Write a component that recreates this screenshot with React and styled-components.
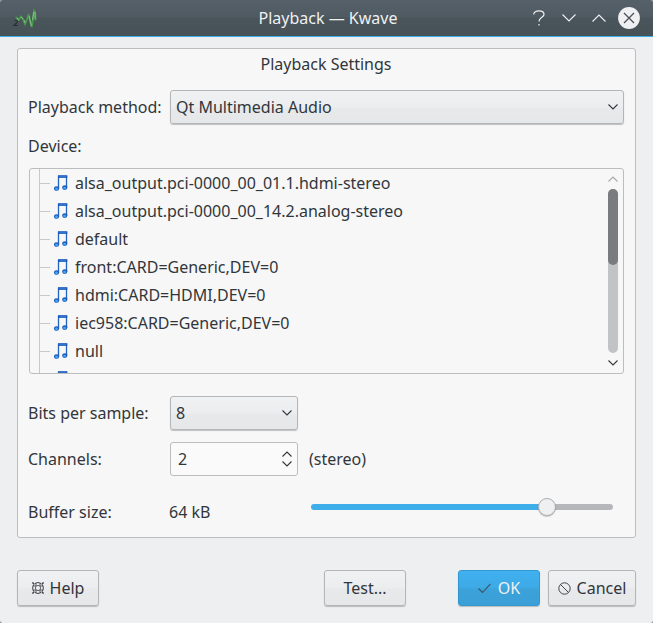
import React, { useRef, useState } from 'react';
import styled, { createGlobalStyle, css } from 'styled-components';

const GlobalStyle = createGlobalStyle`
  *, *::before, *::after { box-sizing: border-box; }
  body {
    margin: 0;
    background: #8b8f92;
    color: #31363b;
    font: 16px/22px "Noto Sans", sans-serif;
  }
  button, input, select { font: inherit; color: inherit; margin: 0; }
`;

const Window = styled.div`
  background: #eeeff1;
  border-radius: 3px;
  overflow: hidden;
`;

const TitleBar = styled.header`
  display: grid;
  grid-template-columns: 1fr auto 1fr;
  align-items: center;
  height: 37px;
  padding: 0 9px 0 12px;
  border-bottom: 1px solid #3daee9;
  background: linear-gradient(#566069, #4f5a62 46%, #4a555b 50%, #475257);
  color: #eff0f1;
`;

const WindowTitle = styled.h1`
  margin: 0;
  font-size: 16px;
  font-weight: 400;
`;

const WindowControls = styled.div`
  display: flex;
  justify-content: flex-end;
`;

const PlainButton = styled.button`
  display: flex;
  align-items: center;
  justify-content: center;
  padding: 0;
  border: 0;
  background: none;
`;

const ControlButton = styled(PlainButton)`
  width: 30px;
  height: 30px;
  color: #eff0f1;
`;

const Content = styled.main`
  padding: 11px 17px 17px;
`;

const Group = styled.section`
  padding: 4px 11px 11px 10px;
  border: 1px solid #bbbdbf;
  border-radius: 3px;
  background: #f7f7f7;
`;

const GroupTitle = styled.h2`
  margin: 0 0 15px;
  font-size: 16px;
  font-weight: 400;
  text-align: center;
`;

const FormRow = styled.div`
  display: grid;
  grid-template-columns: 142px ${(p) => (p.$wide ? '1fr' : '128px 1fr')};
  align-items: center;
  margin-top: ${(p) => p.$gap || 0}px;
`;

const DeviceLabel = styled.div`
  margin: 11px 0;
`;

const raised = css`
  border: 1px solid #b3b5b7;
  border-radius: 3px;
  background: linear-gradient(#f0f1f2, #ecedef 50%, #e8e9eb 54%, #e6e7e9);
  box-shadow: 0 1px 1px rgba(0, 0, 0, 0.22);
`;

const SelectBox = styled.div`
  display: grid;
  align-items: center;
  > * { grid-area: 1 / 1; }
  > svg { justify-self: end; margin-right: 6px; pointer-events: none; }
`;

const Select = styled.select`
  ${raised}
  width: 100%;
  height: 34px;
  padding: 0 24px 0 5px;
  appearance: none;
`;

const DeviceBox = styled.div`
  display: flex;
  height: 206px;
  margin: 0 0 22px 1px;
  padding-right: 5px;
  border: 1px solid #bbbdbf;
  border-radius: 3px;
`;

const DeviceList = styled.ul`
  flex: 1;
  min-width: 0;
  margin: 0;
  padding: 0 0 0 9px;
  list-style: none;
  overflow-y: auto;
  scrollbar-width: none;
`;

const Device = styled.li`
  display: flex;
  align-items: center;
  height: 28px;
  border-left: 1px solid #c6c8c9;
  white-space: nowrap;
  &::before {
    content: "";
    width: 10px;
    height: 1px;
    margin-right: 4px;
    background: #c6c8c9;
  }
  > svg { margin-right: 7px; }
`;

const ScrollBar = styled.div`
  display: flex;
  flex-direction: column;
  width: 10px;
`;

const ScrollButton = styled(PlainButton)`
  height: 20px;
  color: ${(p) => (p.$dim ? '#a5a8ab' : '#31363b')};
`;

const ScrollTrack = styled.div`
  flex: 1;
  border-radius: 5px;
  background: #c2c3c5;
`;

const ScrollThumb = styled.div`
  height: 76px;
  border-radius: 5px;
  background: #7a7b7f;
`;

const SpinBox = styled.div`
  display: flex;
  height: 34px;
  border: 1px solid #bbbdbf;
  border-radius: 3px;
  background: #fafafa;
`;

const SpinInput = styled.input`
  flex: 1;
  min-width: 0;
  padding: 0 0 0 7px;
  border: 0;
  background: none;
  outline: none;
  appearance: textfield;
  &::-webkit-inner-spin-button { appearance: none; display: none; }
`;

const SpinButtons = styled.div`
  display: flex;
  flex-direction: column;
  justify-content: center;
  padding-right: 5px;
`;

const SpinButton = styled(PlainButton)`
  height: 10px;
`;

const Hint = styled.span`
  padding-left: 11px;
`;

const BufferValue = styled.output`
  margin-left: -1px;
`;

const Slider = styled.input`
  width: auto;
  height: 18px;
  margin: 0 11px 10px 13px;
  background: none;
  appearance: none;
  &::-webkit-slider-runnable-track {
    height: 6px;
    border-radius: 3px;
    background: linear-gradient(to right, #3daee9 var(--fill), #b6b7bb var(--fill));
  }
  &::-webkit-slider-thumb {
    width: 18px;
    height: 18px;
    margin-top: -6px;
    border: 1px solid #acadaf;
    border-radius: 50%;
    background: #eff0f1;
    box-shadow: 0 1px 1px rgba(0, 0, 0, 0.2);
    appearance: none;
  }
`;

const ButtonBar = styled.footer`
  display: grid;
  grid-template-columns: 1fr auto auto auto;
  justify-items: start;
  margin-top: 32px;
`;

const DialogButton = styled.button`
  ${raised}
  display: flex;
  align-items: center;
  justify-content: center;
  gap: ${(p) => p.$gap || 6}px;
  width: ${(p) => (p.$wide ? 88 : 82)}px;
  height: 36px;
  margin-right: ${(p) => p.$after || 0}px;
  padding: 0;
  ${(p) => p.$primary && css`
    border-color: #3498d0;
    background: linear-gradient(#40b0ef, #3daae6 49%, #3ba2da 53%, #3a9fd6);
    color: #eff0f1;
  `}
`;

function Chevron({ up, width = 10 }) {
  const h = width / 2;
  return (
    <svg width={width} height={h + 1} viewBox={`0 0 ${width} ${h + 1}`} fill="none" stroke="currentColor" strokeWidth="1.1" aria-hidden="true">
      <path d={up ? `M.5 ${h + 0.5} L${h} 1 L${width - 0.5} ${h + 0.5}` : `M.5 .5 L${h} ${h} L${width - 0.5} .5`} />
    </svg>
  );
}

function KwaveIcon() {
  return (
    <svg width="25" height="20" viewBox="0 0 25 20" fill="none" aria-hidden="true">
      <path d="M2.500 12.500h4l-2 2.500-2.500 2.500h4" stroke="#2a3033" strokeWidth="1.200" />
      <path d="M4 9l2.500 3L9 8.500l2 2.500 2 5 2.500-6 1-4 1.500 6 1.700 7 1.500-9L22 2.500l1 1 .5 9" stroke="#46994a" strokeWidth="1.900" />
      <path d="M5 10l2 2.500M9 9l2 2M12 12l1.200 3M17 8l2.400 10M20.500 12l1.200-8M23 4l.3 7" stroke="#9ac896" strokeWidth=".8" />
    </svg>
  );
}

function MusicIcon() {
  return (
    <svg width="14" height="16" viewBox="0 0 14 16" aria-hidden="true">
      <path d="M4.500 13V1.500h8V12" fill="none" stroke="#2563c0" strokeWidth="1.300" />
      <path d="M4 .2h9.300v2.800H4z" fill="#2159b8" />
      <path d="M5.500 2h6.500" stroke="#3f92e8" strokeWidth="1" />
      <ellipse cx="2.600" cy="13.500" rx="2.600" ry="2.300" fill="#1f5cb8" />
      <ellipse cx="10.800" cy="12.600" rx="2.600" ry="2.300" fill="#1f5cb8" />
      <circle cx="2.500" cy="14" r="1.400" fill="#4aa6f4" />
      <circle cx="10.600" cy="13.100" r="1.400" fill="#4aa6f4" />
    </svg>
  );
}

function QuestionIcon() {
  return (
    <svg width="12" height="16" viewBox="0 0 12 16" fill="none" stroke="currentColor" strokeWidth="1.200" aria-hidden="true">
      <path d="M.7 4.500C.7 2 3 .8 6 .8s5 1.200 5 3.600C11 7.500 6 7 6 11.500" />
      <path d="M6 14v1.500" />
    </svg>
  );
}

function CloseIcon() {
  return (
    <svg width="22" height="22" viewBox="0 0 22 22" aria-hidden="true">
      <circle cx="11" cy="11" r="10.900" fill="#eff0f1" />
      <path d="M6 6l10 10M16 6L6 16" stroke="#475057" strokeWidth="1.300" />
    </svg>
  );
}

function HelpIcon() {
  return (
    <svg width="12" height="12" viewBox="0 0 12 12" fill="none" stroke="#3b4045" aria-hidden="true">
      <path d="M3 1.500C5 .3 7 .3 9 1.500M3 10.500c2 1.200 4 1.200 6 0M1.500 3C.4 5 .4 7 1.500 9M10.500 3c1.100 2 1.100 4 0 6" />
      <circle cx="6" cy="6" r="2.600" strokeWidth=".8" />
      <path d="M4 1v3H.8M8 1v3h3.200M4 11V8H.8M8 11V8h3.200" strokeWidth=".8" />
      <path d="M.4.4l2 2M11.600.4l-2 2M.4 11.600l2-2M11.600 11.600l-2-2" strokeWidth="1.400" />
    </svg>
  );
}

function CheckIcon() {
  return (
    <svg width="13" height="11" viewBox="0 0 13 11" fill="none" stroke="#3f515e" strokeWidth="1.100" aria-hidden="true">
      <path d="M.5 5.500l4 4L12.500.8" />
    </svg>
  );
}

function CancelIcon() {
  return (
    <svg width="13" height="13" viewBox="0 0 13 13" fill="none" stroke="#41464b" strokeWidth="1" aria-hidden="true">
      <circle cx="6.500" cy="6.500" r="5.700" />
      <path d="M2.500 2.500l8 8" />
    </svg>
  );
}

const devices = [
  'alsa_output.pci-0000_00_01.1.hdmi-stereo',
  'alsa_output.pci-0000_00_14.2.analog-stereo',
  'default',
  'front:CARD=Generic,DEV=0',
  'hdmi:CARD=HDMI,DEV=0',
  'iec958:CARD=Generic,DEV=0',
  'null',
  '',
];

export default function App() {
  const list = useRef(null);
  const [channels, setChannels] = useState(2);
  const [buffer, setBuffer] = useState(16);
  const scroll = (dy) => list.current.scrollBy(0, dy);

  return (
    <>
      <GlobalStyle />
      <Window>
        <TitleBar>
          <KwaveIcon />
          <WindowTitle>Playback — Kwave</WindowTitle>
          <WindowControls>
            <ControlButton aria-label="Context help"><QuestionIcon /></ControlButton>
            <ControlButton aria-label="Minimize"><Chevron width={14} /></ControlButton>
            <ControlButton aria-label="Maximize"><Chevron up width={14} /></ControlButton>
            <ControlButton aria-label="Close"><CloseIcon /></ControlButton>
          </WindowControls>
        </TitleBar>
        <Content>
          <Group>
            <GroupTitle>Playback Settings</GroupTitle>
            <FormRow $wide>
              <label htmlFor="method">Playback method:</label>
              <SelectBox>
                <Select id="method"><option>Qt Multimedia Audio</option></Select>
                <Chevron />
              </SelectBox>
            </FormRow>
            <DeviceLabel id="device-label">Device:</DeviceLabel>
            <DeviceBox>
              <DeviceList ref={list} aria-labelledby="device-label" tabIndex={0}>
                {devices.map((name) => (
                  <Device key={name}><MusicIcon />{name}</Device>
                ))}
              </DeviceList>
              <ScrollBar>
                <ScrollButton $dim aria-label="Scroll up" onClick={() => scroll(-28)}><Chevron up /></ScrollButton>
                <ScrollTrack><ScrollThumb /></ScrollTrack>
                <ScrollButton aria-label="Scroll down" onClick={() => scroll(28)}><Chevron /></ScrollButton>
              </ScrollBar>
            </DeviceBox>
            <FormRow>
              <label htmlFor="bits">Bits per sample:</label>
              <SelectBox>
                <Select id="bits"><option>8</option></Select>
                <Chevron />
              </SelectBox>
            </FormRow>
            <FormRow $gap={12}>
              <label htmlFor="channels">Channels:</label>
              <SpinBox>
                <SpinInput id="channels" type="number" min="1" value={channels} onChange={(e) => setChannels(Number(e.target.value))} />
                <SpinButtons>
                  <SpinButton aria-label="More channels" onClick={() => setChannels(channels + 1)}><Chevron up /></SpinButton>
                  <SpinButton aria-label="Fewer channels" onClick={() => setChannels(Math.max(1, channels - 1))}><Chevron /></SpinButton>
                </SpinButtons>
              </SpinBox>
              <Hint>(stereo)</Hint>
            </FormRow>
            <FormRow $gap={22}>
              <label htmlFor="buffer">Buffer size:</label>
              <BufferValue htmlFor="buffer">{2 ** (buffer - 10)} kB</BufferValue>
              <Slider
                id="buffer"
                type="range"
                min="12"
                max="17"
                value={buffer}
                onChange={(e) => setBuffer(Number(e.target.value))}
                style={{ '--fill': `${(buffer - 12) * 20}%` }}
              />
            </FormRow>
          </Group>
          <ButtonBar>
            <DialogButton><HelpIcon />Help</DialogButton>
            <DialogButton $after={52}>Test...</DialogButton>
            <DialogButton $primary $gap={7} $after={8}><CheckIcon />OK</DialogButton>
            <DialogButton $wide><CancelIcon />Cancel</DialogButton>
          </ButtonBar>
        </Content>
      </Window>
    </>
  );
}
